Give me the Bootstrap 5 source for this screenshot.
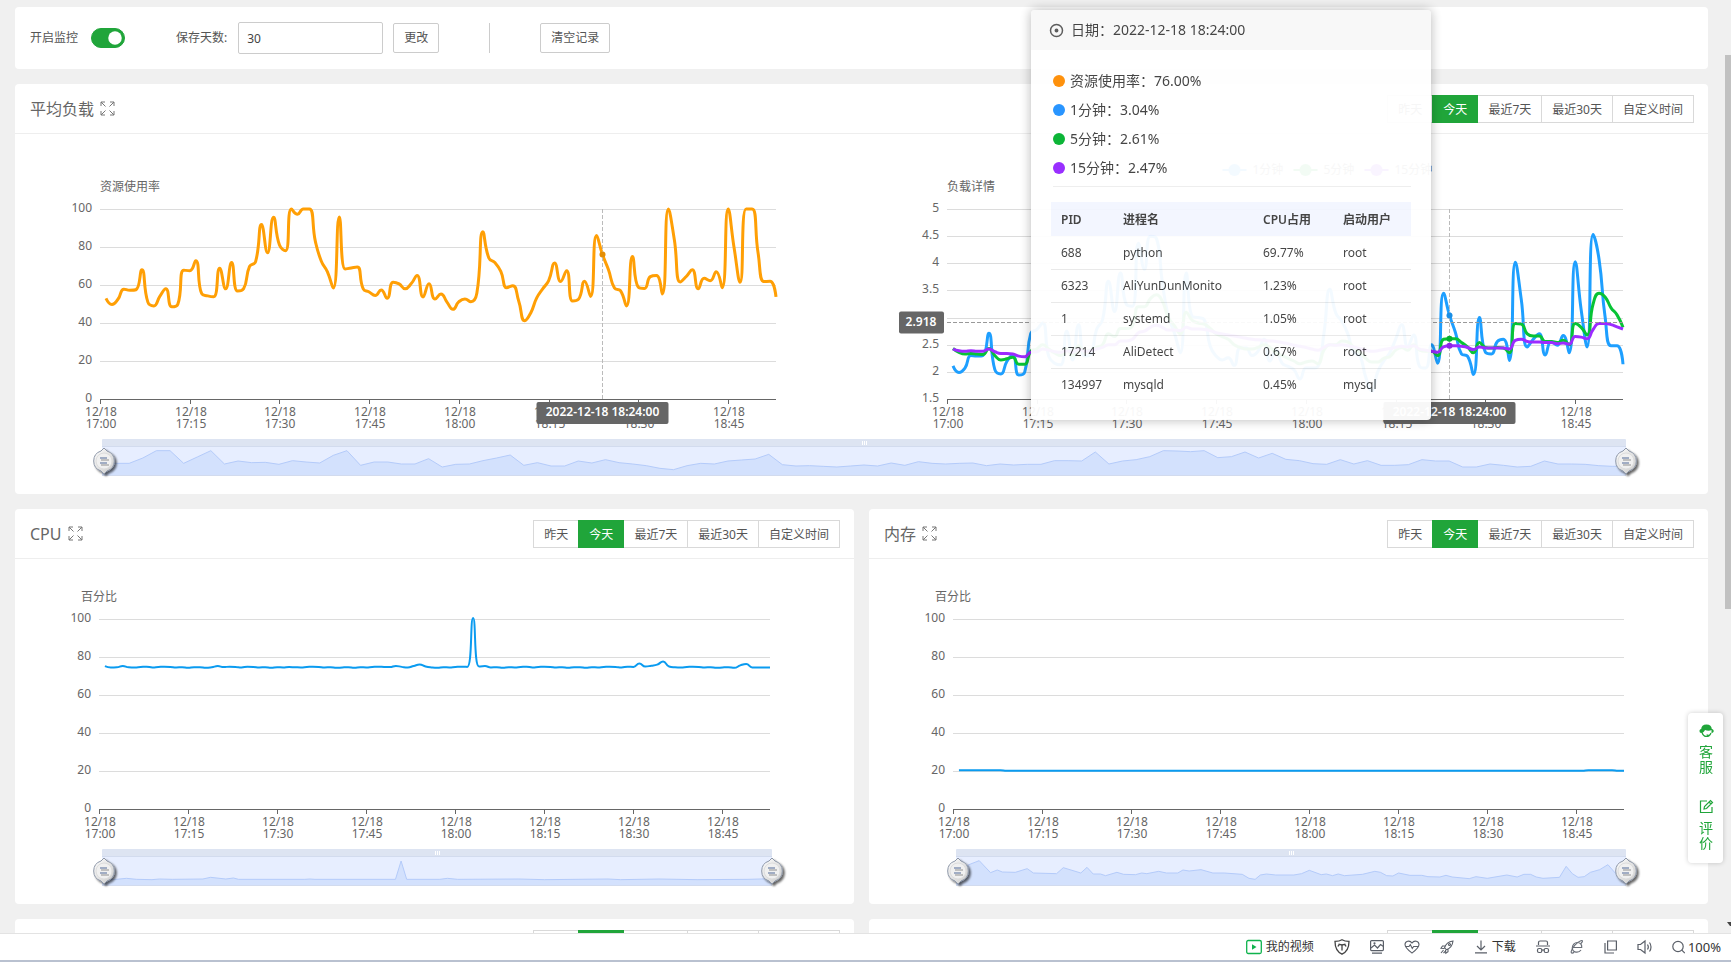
<!DOCTYPE html>
<html lang="zh-CN">
<head>
<meta charset="utf-8">
<meta name="viewport" content="width=device-width, initial-scale=1">
<title>监控</title>
<link rel="stylesheet" href="https://cdn.jsdelivr.net/npm/bootstrap@5.3.0/dist/css/bootstrap.min.css">
<style>
:root{--green:#20a53a;--line:#d9d9d9}
body{font-family:"Noto Sans","Noto Sans CJK SC",sans-serif;font-size:12px;line-height:18px;color:#555;background:#f0f0f0}
.page-scroll{padding:7px 23px 0 15px;gap:15px;min-height:0}
.panel{background:#fff;border-radius:4px}
.panel-pair{gap:15px}
.toolbar-panel{height:62px;padding:0 15px}
.panel-head{height:50px;padding:0 14px 0 15px;border-bottom:1px solid #eee}
.panel-title{font-size:16px;line-height:24px;font-weight:400;color:#666;gap:6px}
.ctl{border:1px solid #ccc;border-radius:2px;background:#fff;color:#555;height:30px;padding:0 10px;font-size:12px;line-height:18px}
.days-label{margin:0 11px 0 51px}
.days-input{width:145px;height:32px;padding:0 8px;margin-right:10px;color:#444}
.form-check-input.monitor-switch{width:34px;height:20px;margin:0 0 0 13px;border-color:var(--green);background-size:18px}
.monitor-switch:checked{background-color:var(--green)}
.split{width:1px;height:30px;background:#ccc;margin:0 50px}
.range-btns{height:28px}
.range-btns .btn{--bs-btn-font-size:12px;--bs-btn-line-height:18px;--bs-btn-padding-x:10px;--bs-btn-padding-y:0;--bs-btn-color:#555;--bs-btn-border-color:#d9d9d9;--bs-btn-border-radius:0;--bs-btn-bg:#fff;--bs-btn-active-bg:#20a53a;--bs-btn-active-border-color:#20a53a;--bs-btn-active-color:#fff;padding-top:2px}
.chart{display:block;width:100%;height:283px}
.zoomer{display:block;width:100%;height:62px}
.avg-charts{padding-top:15px}
svg text{font-size:12px;fill:#666}
svg text.flag{fill:#fff;font-weight:600}
.tip{right:277px;top:-74px;width:400px;height:410px;z-index:5;background:#fff;opacity:.95;border-radius:4px;box-shadow:0 0 12px rgba(0,0,0,.3);color:#3c3c3c}
.tip-head{height:40px;background:#f8f8f8;padding:0 18px;font-size:14px;gap:7px;border-radius:4px 4px 0 0}
.tip-list{margin:16px 20px 0 22px;font-size:14px;line-height:29px;border-bottom:1px solid #eee;height:121px}
.tip-list li{gap:5px}
.dot{width:12px;height:12px;border-radius:50%}
.tip-table{width:360px;margin:15px 0 0 20px;table-layout:fixed;font-size:12px;line-height:18px}
.tip-table th{height:34px;background:#f3f6ff;padding:2px 10px 0;font-weight:600}
.tip-table td{height:33px;padding:1px 10px 0;border-bottom:1px solid #e8e8e8}
.tip-table tr:last-child td{border-bottom:0}
.scroll-rail{right:0;top:0;width:6px}
.scroll-thumb{margin-top:55px;height:554px;background:#c1c1c1}
.side-tools{right:8px;top:713px;width:35px;height:150px;padding:10px 0 0 1px;background:#fff;border-radius:4px;box-shadow:0 0 5px rgba(0,0,0,.2);z-index:4;gap:25px}
.side-tools a{color:var(--green);font-size:14px;line-height:15px;gap:6px;width:14px;text-align:center}
.status-bar{height:29px;background:#fff;border-top:1px solid #e3e3e3;border-bottom:2px solid #b9c1d0;padding:0 10px 0 0;color:#333}
.status-bar svg{flex:none}
.status-bar a{color:#333;gap:4px}
.status-bar .zoom-level{font-size:13px;gap:3px}
.status-icons{gap:20px}
</style>
</head>
<body class="vh-100 overflow-hidden d-flex flex-column">
<main class="page-scroll flex-grow-1 overflow-hidden position-relative d-flex flex-column">
  <form class="panel toolbar-panel d-flex align-items-center flex-shrink-0">
    <label for="sw">开启监控</label>
    <div class="form-switch p-0 d-flex"><input class="form-check-input monitor-switch float-none" type="checkbox" role="switch" id="sw" checked></div>
    <label for="days" class="days-label">保存天数:</label>
    <input id="days" class="ctl days-input" type="text" value="30">
    <button type="button" class="ctl">更改</button>
    <span class="split"></span>
    <button type="button" class="ctl">清空记录</button>
  </form>

  <section class="panel position-relative flex-shrink-0">
    <div class="panel-head d-flex align-items-center justify-content-between">
      <h2 class="panel-title d-flex align-items-center m-0">平均负载<svg width="15" height="15"><use href="#expand"/></svg></h2>
      <div class="range-btns btn-group"></div>
    </div>
    <div class="avg-charts row g-0">
      <div class="col-6"><svg class="chart" id="usage"></svg></div>
      <div class="col-6"><svg class="chart" id="load"></svg></div>
    </div>
    <svg class="zoomer" id="zoomAvg"></svg>

    <div class="tip position-absolute">
      <div class="tip-head d-flex align-items-center"><svg width="15" height="15" viewBox="0 0 15 15" fill="none" stroke="#555" stroke-width="1.5"><circle cx="7.500" cy="7.500" r="6"/><circle cx="7.500" cy="7.500" r="1.200" fill="#555"/></svg><span>日期：2022-12-18 18:24:00</span></div>
      <ul class="tip-list list-unstyled">
        <li class="d-flex align-items-center"><span class="dot" style="background:#ff8c00"></span>资源使用率：76.00%</li>
        <li class="d-flex align-items-center"><span class="dot" style="background:#1e90ff"></span>1分钟：3.04%</li>
        <li class="d-flex align-items-center"><span class="dot" style="background:#00b22d"></span>5分钟：2.61%</li>
        <li class="d-flex align-items-center"><span class="dot" style="background:#9424ff"></span>15分钟：2.47%</li>
      </ul>
      <table class="tip-table">
        <colgroup><col style="width:62px"><col style="width:140px"><col style="width:80px"><col style="width:78px"></colgroup>
        <thead><tr><th>PID</th><th>进程名</th><th>CPU占用</th><th>启动用户</th></tr></thead>
        <tbody>
          <tr><td>688</td><td>python</td><td>69.77%</td><td>root</td></tr>
          <tr><td>6323</td><td>AliYunDunMonito</td><td>1.23%</td><td>root</td></tr>
          <tr><td>1</td><td>systemd</td><td>1.05%</td><td>root</td></tr>
          <tr><td>17214</td><td>AliDetect</td><td>0.67%</td><td>root</td></tr>
          <tr><td>134997</td><td>mysqld</td><td>0.45%</td><td>mysql</td></tr>
        </tbody>
      </table>
    </div>
  </section>

  <div class="d-flex panel-pair flex-shrink-0">
    <section class="panel flex-fill w-50">
      <div class="panel-head d-flex align-items-center justify-content-between">
        <h2 class="panel-title d-flex align-items-center m-0">CPU<svg width="15" height="15"><use href="#expand"/></svg></h2>
        <div class="range-btns btn-group"></div>
      </div>
      <svg class="chart" id="cpu"></svg>
      <svg class="zoomer" id="zoomCpu"></svg>
    </section>
    <section class="panel flex-fill w-50">
      <div class="panel-head d-flex align-items-center justify-content-between">
        <h2 class="panel-title d-flex align-items-center m-0">内存<svg width="15" height="15"><use href="#expand"/></svg></h2>
        <div class="range-btns btn-group"></div>
      </div>
      <svg class="chart" id="mem"></svg>
      <svg class="zoomer" id="zoomMem"></svg>
    </section>
  </div>

  <div class="d-flex panel-pair flex-shrink-0">
    <section class="panel flex-fill w-50"><div class="panel-head d-flex align-items-center justify-content-end"><div class="range-btns btn-group"></div></div></section>
    <section class="panel flex-fill w-50"><div class="panel-head d-flex align-items-center justify-content-end"><div class="range-btns btn-group"></div></div></section>
  </div>

  <div class="scroll-rail position-absolute h-100 d-flex flex-column justify-content-between">
    <div class="scroll-thumb"></div>
    <svg width="6" height="12" class="flex-shrink-0"><path d="M2 1h4v4h-1z" fill="#444"/></svg>
  </div>
</main>

<footer class="status-bar d-flex align-items-center justify-content-end flex-shrink-0">
  <div class="status-icons d-flex align-items-center">
    <a href="#" class="d-flex align-items-center text-decoration-none"><svg width="16" height="16" viewBox="0 0 16 16" fill="none" stroke="#0fb34d" stroke-width="1.300"><rect x=".7" y="1.500" width="14.600" height="13" rx="1.500"/><path d="M6 5.200v5.600l4.500-2.800z" fill="#0fb34d" stroke="none"/></svg>我的视频</a>
    <svg width="16" height="16" viewBox="0 0 16 16" fill="none" stroke="#444" stroke-width="1.300"><path d="M8 .8c2 1.200 4.500 1.600 7 1.600 0 6-1.500 10-7 12.800C2.500 12.400 1 8.400 1 2.400c2.500 0 5-.4 7-1.600z"/><path d="M4 7.500c.5-2 2.500-2.500 4-1.300 1.500-1.200 3.500-.7 4 1.300M4.500 5.200L8 6l3.500-.8M8 6v5.500"/></svg>
    <svg width="14" height="16" viewBox="0 0 14 16" fill="none" stroke="#5a5f68" stroke-width="1.200"><rect x=".6" y="1.600" width="12.800" height="10" rx="1"/><path d="M1 9l3.500-3 3 3 3-3.500 3 2M2 14.200h10"/><circle cx="4.500" cy="4.300" r=".5"/></svg>
    <svg width="16" height="16" viewBox="0 0 16 16" fill="none" stroke="#5a5f68" stroke-width="1.100"><path d="M8 14C4 11 1 8.800 1 5.500 1 2 5.800.8 8 4c2.200-3.200 7-2 7 1.500C15 8.800 12 11 8 14z"/><path d="M1.500 7.500H5l1.300-2 2 4 1.300-2h4.900"/></svg>
    <svg width="14" height="16" viewBox="0 0 14 16" fill="none" stroke="#5a5f68" stroke-width="1.100"><path d="M4.500 9C5.500 5.500 8.500 2.500 13 2c-.5 4.500-3 7.500-6.500 8.700zM5.200 7H2.500L1 9.200l3 .3M8 10v2.700L5.800 14.200 5.500 11M3.500 11L1 14M5 12.500L3.500 14"/><circle cx="9.500" cy="5.500" r="1"/></svg>
    <a href="#" class="d-flex align-items-center text-decoration-none"><svg width="14" height="16" viewBox="0 0 14 16" fill="none" stroke="#5a5f68" stroke-width="1.200"><path d="M7 1.500v9M3 7l4 4 4-4M1 13.800h12"/></svg>下载</a>
    <svg width="14" height="16" viewBox="0 0 14 16" fill="none" stroke="#5a5f68" stroke-width="1.200"><path d="M2.500 6V3.500c0-1 .5-1.500 1.500-1.500h6c1 0 1.500.5 1.500 1.500V6M0 7h14"/><rect x="1.500" y="9.500" width="4.300" height="4" rx="1.500"/><rect x="8.200" y="9.500" width="4.300" height="4" rx="1.500"/><path d="M5.800 11h2.400"/></svg>
    <svg width="14" height="16" viewBox="0 0 14 16" fill="none" stroke="#6a6f78" stroke-width="1.200"><path d="M3 8.500h8.700c.4-3-1.500-5-4.400-5C4.500 3.500 2.300 6 2.300 8.800c0 5 6.200 5.700 8.700 2.200"/><path d="M11 4.500c2-2 2-3.500-.2-2.800C7 3 2 8.500 1.200 12.500c-.3 2 1.300 2 3 .8"/></svg>
    <svg width="13" height="16" viewBox="0 0 13 16" fill="none" stroke="#5a5f68" stroke-width="1.200"><path d="M3.600 2h8.800v9H3.600zM1 4v10h9"/></svg>
    <svg width="15" height="16" viewBox="0 0 15 16" fill="none" stroke="#5a5f68" stroke-width="1.200"><path d="M1 5.500h2.500L8 2v12L3.500 10.500H1zM10.500 5.500c1 1.500 1 3.500 0 5M12.500 3.500c2 2.500 2 6.500 0 9"/></svg>
    <a href="#" class="zoom-level d-flex align-items-center text-decoration-none"><svg width="13" height="16" viewBox="0 0 13 16" fill="none" stroke="#5a5f68" stroke-width="1.200"><circle cx="6" cy="7.500" r="5.200"/><path d="M9.800 11.200l3 3"/></svg>100%</a>
  </div>
</footer>

<aside class="side-tools position-fixed d-flex flex-column align-items-center">
  <a href="#" class="d-flex flex-column align-items-center text-decoration-none"><svg width="15" height="15" viewBox="0 0 15 15" class="flex-shrink-0"><path d="M7.500 1.500C4 1.500 2.300 3.500 2.200 6 1 6 .5 7 .5 8s.6 2 1.800 2C4 9.800 5.500 8.500 6 7c2 1 5 1 6.500 0v3c1.500.2 2.200-1 2.200-2S14 6 12.800 6C12.700 3.500 11 1.500 7.500 1.500z" fill="#20a53a"/><path d="M3 9.500c1 3 3 4 4.500 4s3.500-1 4.500-3.500M7.500 12.200h2" fill="none" stroke="#20a53a" stroke-width="1.200"/></svg><span>客服</span></a>
  <a href="#" class="d-flex flex-column align-items-center text-decoration-none"><svg width="15" height="15" viewBox="0 0 15 15" fill="none" stroke="#20a53a" stroke-width="1.200" class="flex-shrink-0"><path d="M8 2H1.500v11.500h11.500V8"/><path d="M5 10l.5-2.500L11.500 1.500l2 2L7.500 9.500zM10 3l2 2"/></svg><span>评价</span></a>
</aside>

<svg width="0" height="0" class="position-absolute">
  <defs>
    <symbol id="expand" viewBox="0 0 15 15"><path d="M1 5V1h4M1 1l4.500 4.500M10 1h4v4M14 1L9.500 5.500M1 10v4h4M1 14l4.500-4.500M14 10v4h-4M14 14L9.500 9.500" fill="none" stroke="#777" stroke-width="1"/></symbol>
    <linearGradient id="silver" x1="0" y1="0" x2="1" y2="1"><stop offset="0" stop-color="#fff"/><stop offset="1" stop-color="#c8c8c8"/></linearGradient>
    <filter id="drop" x="-50%" y="-50%" width="200%" height="200%"><feDropShadow dx="2" dy="2" stdDeviation="1.200" flood-color="#000" flood-opacity=".6"/></filter>
  </defs>
</svg>

<script src="https://cdn.jsdelivr.net/npm/bootstrap@5.3.0/dist/js/bootstrap.bundle.min.js"></script>
<script>
document.querySelectorAll('.range-btns').forEach(g => {
  g.innerHTML = ['昨天','今天','最近7天','最近30天','自定义时间'].map((t, i) => `<button type="button" class="btn${i === 1 ? ' active' : ''}">${t}</button>`).join('');
});

// one sample per minute, starting at 17:01
const usage = [53,49.8,52.5,57.8,57.2,57.5,68,51,49,54,58,48.5,49.8,67.8,67.5,72.8,55.4,54.3,53.8,68.8,58,71.8,56.8,58,69.8,72.2,91.8,77,95.6,81,78,100,97.2,100,100,83,72.5,67,58.4,95.8,68.4,69,69.5,58,56.3,54.5,57.4,53,61.5,60.6,58,60.6,65,53.7,60.7,52.6,55.3,51,47.2,51.2,52.6,51.2,55.8,88,74.2,71.8,67.2,58.6,59.6,51.4,41.2,45.3,53.2,58,62.3,71.6,61.8,67.5,51.6,52.6,62,54,86,76,68,58.4,57,49,75,58.8,58.2,64.4,65,55.3,100,84,61.6,64.5,68,58,63.5,62.3,67,58.6,100,79.5,61.4,100,100,77,61.8,62,53.7];
const m1 = [2.11,1.99,2.07,2.3,2.29,2.3,2.71,2.04,1.96,2.19,2.31,1.94,2,2.71,2.78,2.9,2.29,2.16,2.13,2.75,2.22,2.87,2.29,2.32,2.78,2.96,3.67,3.11,3.82,3.24,3.21,4.37,3.89,4.5,4.46,3.64,3.02,2.72,2.35,3.82,3.02,3,2.96,2.47,2.29,2.22,2.26,2.12,2.44,2.44,2.3,2.38,2.6,2.2,2.4,2.16,2.1,2.04,1.87,2.07,2.07,2.1,2.7,3.52,3.08,2.93,2.7,2.35,2.3,1.9,1.65,2,2.2,2.35,2.6,2.87,2.47,2.68,2.1,2.07,2.5,2.16,3.45,3.04,2.72,2.33,2.29,1.95,3,2.36,2.33,2.56,2.6,2.21,4.02,3.33,2.46,2.6,2.7,2.31,2.56,2.49,2.67,2.35,4.03,3.15,2.46,4.53,4.07,3.02,2.48,2.48,2.14];
const m5 = [2.43,2.36,2.33,2.34,2.33,2.32,2.43,2.3,2.22,2.24,2.27,2.14,2.14,2.38,2.42,2.5,2.42,2.35,2.3,2.42,2.3,2.48,2.38,2.4,2.45,2.5,2.7,2.65,2.8,2.8,2.85,3.2,3.2,3.35,3.42,3.3,3,2.85,2.7,3.1,2.95,2.9,2.88,2.8,2.7,2.65,2.6,2.5,2.45,2.42,2.42,2.45,2.5,2.45,2.35,2.3,2.25,2.2,2.15,2.18,2.2,2.15,2.4,2.5,2.5,2.57,2.55,2.45,2.35,2.25,2.18,2.18,2.25,2.28,2.4,2.45,2.4,2.5,2.4,2.38,2.38,2.3,2.6,2.61,2.61,2.54,2.46,2.35,2.54,2.45,2.44,2.45,2.44,2.35,2.89,2.88,2.7,2.66,2.66,2.56,2.56,2.54,2.58,2.5,2.89,2.82,2.68,3.25,3.45,3.38,3.18,3.05,2.82];
const m15 = [2.42,2.39,2.38,2.39,2.38,2.38,2.42,2.37,2.34,2.34,2.33,2.29,2.28,2.36,2.37,2.42,2.4,2.37,2.36,2.39,2.36,2.42,2.38,2.39,2.42,2.45,2.5,2.5,2.57,2.57,2.6,2.72,2.75,2.82,2.86,2.82,2.77,2.77,2.76,2.82,2.79,2.79,2.78,2.76,2.72,2.7,2.68,2.66,2.64,2.62,2.6,2.59,2.58,2.57,2.56,2.54,2.52,2.49,2.47,2.45,2.42,2.4,2.45,2.5,2.49,2.5,2.48,2.46,2.43,2.4,2.38,2.39,2.41,2.43,2.45,2.47,2.46,2.48,2.42,2.4,2.38,2.36,2.46,2.48,2.48,2.47,2.45,2.41,2.46,2.44,2.44,2.44,2.44,2.42,2.58,2.6,2.56,2.55,2.55,2.54,2.54,2.52,2.53,2.51,2.65,2.64,2.61,2.78,2.89,2.89,2.87,2.83,2.79];
const cpu = Array.from({length: 113}, (_, i) => 74.6 + [0.2,-0.1,0,0.3,0,-0.1,0.1,-0.3][(i * 5 + (i >> 3)) % 8]);
Object.entries({1:75.2,4:75.3,20:75.2,50:75.3,53:75.3,54:76,55:75,63:100.5,64:75,65:75.2,91:76.6,92:75,93:75.4,94:76,95:77.6,96:75,108:75.6,109:76.3,110:74.5,111:74.5,112:74.5,113:74.5}).forEach(([k, v]) => cpu[k - 1] = v);
const mem = Array.from({length: 113}, (_, i) => i < 8 || (i > 105 && i < 111) ? 20.4 : 20.1);

// preview curves: heights above the slider's floor
const prevAvg = [131,131,131,115,93,93,131,112,93,133,124,129,128,134,123,127,130,107,93,137,127,127,133,133,117,142,134,133,123,115,106,137,129,139,139,124,130,120,129,133,138,146,150,138,131,133,124,121,118,104,135,139,138,140,142,139,136,139,130,137,126,131,133,131,130,138,133,136,134,134,123,123,124,97,133,124,120,111,93,94,96,93,114,111,97,115,101,119,123,132,134,120,133,123,137,137,135,120,124,124,142,142,133,137,142,140,124,133,133,134,138,140,139].map((v, i) => [i / 112, (166 - v) / 3]);
const prevCpu = [[82,898],[110,898],[130,895],[150,898],[180,899],[195,897],[220,898],[280,897],[295,892],[325,897],[340,894],[350,898],[480,898],[490,897],[500,898],[658,898],[669,843],[680,898],[745,898],[760,895],[780,898],[900,897],[950,899],[1075,897],[1100,899],[1175,897],[1250,899],[1350,898],[1397,896]].map(([x, y]) => [(x - 82) / 1315, (915 - y) / 3]);
const prevMem = [[70,398],[95,375],[115,363],[137,399],[150,391],[160,397],[185,398],[208,387],[220,400],[265,402],[278,384],[312,400],[324,383],[336,403],[350,403],[360,408],[382,398],[395,404],[418,405],[430,400],[440,402],[463,395],[478,400],[500,400],[510,391],[522,394],[545,390],[568,400],[590,400],[625,404],[638,416],[650,419],[660,406],[672,403],[690,406],[725,406],[740,402],[755,392],[778,405],[788,403],[800,408],[811,403],[823,408],[858,404],[882,395],[893,398],[905,408],[917,409],[928,400],[950,407],[973,407],[985,411],[1008,412],[1020,407],[1032,412],[1065,417],[1078,411],[1100,416],[1138,406],[1158,412],[1171,404],[1184,404],[1195,412],[1208,416],[1240,413],[1253,380],[1265,402],[1276,413],[1288,411],[1300,398],[1318,390],[1334,375],[1348,400],[1369,400]].map(([x, y]) => [(x - 70) / 1299, (436 - y) / 3]);

const clamp = (v, a, b) => Math.max(Math.min(a, b), Math.min(Math.max(a, b), v));

function smoothPath(p) {
  let d = `M${p[0]}`, c0 = p[0];
  for (let i = 1; i < p.length; i++) {
    const [x, y] = p[i], pr = p[i - 1], nx = p[i + 1];
    let c1 = [x, y], next = [x, y];
    if (nx) {
      const lp = Math.hypot(x - pr[0], y - pr[1]), ln = Math.hypot(nx[0] - x, nx[1] - y), r = ln / (lp + ln);
      next = [0, 1].map(k => clamp(p[i][k] + (nx[k] - pr[k]) * 0.5 * r, p[i][k], nx[k]));
      c1 = [0, 1].map(k => clamp(p[i][k] - (next[k] - p[i][k]) * lp / ln, pr[k], p[i][k]));
      next = [0, 1].map(k => p[i][k] + (p[i][k] - c1[k]) * ln / lp);
    }
    d += `C${c0} ${c1} ${x},${y}`;
    c0 = next;
  }
  return d;
}

function drawChart(id, o) {
  const el = document.getElementById(id), W = el.getBoundingClientRect().width;
  const L = Math.floor(W * 0.1 + 0.4), R = Math.floor(W * 0.9), T = 60, B = 250;
  const X = m => L + (R - L) * m / 113, Y = v => B - (B - T) * (v - o.min) / (o.max - o.min);
  let s = `<text x="${L}" y="42" text-anchor="${o.anchor || 'start'}">${o.title}</text>`;
  for (let v = o.min; v <= o.max; v += o.step) {
    const y = Math.round(Y(v)) + 0.5;
    if (v > o.min) s += `<path d="M${L} ${y}H${R}" stroke="#dcdcdc"/>`;
    if (!(o.skip && v === o.skip)) s += `<text x="${L - 8}" y="${y + 2}" text-anchor="end">${v}</text>`;
  }
  s += `<path d="M${L} ${B + 0.5}H${R}" stroke="#666"/>`;
  for (let m = 0; m < 113; m += 15) {
    const x = Math.round(X(m)), t = `${17 + Math.floor(m / 60)}:${String(m % 60).padStart(2, '0')}`;
    s += `<path d="M${x + 0.5} ${B}v5" stroke="#666"/><text x="${x + 1}" y="${B + 17}" text-anchor="middle">12/18</text><text x="${x + 1}" y="${B + 29}" text-anchor="middle">${t}</text>`;
  }
  o.series.forEach(([color, data]) => {
    s += `<path d="${smoothPath(data.map((v, i) => [X(i + 1), Y(v)]))}" fill="none" stroke="${color}" stroke-width="${o.width}" stroke-linejoin="round"/>`;
  });
  if (o.pointer) {
    const x = Math.floor(X(o.pointer)) + 0.5;
    s += `<path d="M${x} ${T}V${B}" stroke="#bbb" stroke-dasharray="4 2"/>`;
    o.series.forEach(([color, data]) => s += `<circle cx="${x}" cy="${Y(data[o.pointer - 1])}" r="3" fill="${color}"/><circle cx="${x}" cy="${Y(data[o.pointer - 1])}" r="3" fill="#000" opacity=".1"/>`);
    s += `<rect x="${x - 66}" y="${B + 3}" width="132" height="22" rx="2" fill="#666"/><text class="flag" x="${x}" y="${B + 17}" text-anchor="middle">2022-12-18 18:24:00</text>`;
  }
  if (o.cross) {
    const y = Math.round(Y(o.cross)) + 0.5;
    s += `<path d="M${L} ${y}H${R}" stroke="#999" stroke-dasharray="4 2"/><rect x="${L - 48}" y="${y - 11}" width="45" height="22" rx="2" fill="#666"/><text class="flag" x="${L - 26}" y="${y + 3}" text-anchor="middle">${o.cross}</text>`;
  }
  if (o.legend) o.legend.forEach(([t, c], i) => {
    const x = W - 474 + i * 71;
    s += `<path d="M${x - 12} 21h24" stroke="${c}" stroke-width="2"/><circle cx="${x}" cy="21" r="6" fill="${c}"/><text x="${x + 18}" y="25">${t}</text>`;
  });
  el.innerHTML = s;
}

function drawZoomer(id, pts) {
  const el = document.getElementById(id), W = el.getBoundingClientRect().width, L = 87, R = W - 82;
  const line = pts.map(([f, h]) => `${L + (R - L) * f},${43 - h}`).join('L'), mid = Math.round((L + R) / 2) + 0.5;
  const grip = x => `<g transform="translate(${x} 29)"><path d="M0-13l3 3A10.500 10.500 0 0 1 3 10L0 13l-3-3A10.500 10.500 0 0 1-3-10z" fill="url(#silver)" stroke="#8d97a8" filter="url(#drop)"/><circle r="8" fill="#f0f0f0" stroke="#ddd"/><path d="M-4-3h7M-4 2h7" stroke="#8796b5" stroke-width="1.500"/><path d="M-3-1h8M-3 4h8" stroke="#b0b0b0" stroke-width="1.500"/></g>`;
  el.innerHTML = `<rect x="${L}" y="7" width="${R - L}" height="8" rx="1" fill="#dde4f2"/><rect x="${L}" y="15" width="${R - L}" height="28" fill="#e7eeff"/>
    <path d="M${line}L${R},43H${L}z" fill="#d3e1fd"/><path d="M${line}" fill="none" stroke="#b4cbfa"/>
    <path d="M${L} 14.500H${R}M${L} 43.500H${R}" stroke="#d2dbee"/><path d="M${mid - 2} 9v4M${mid} 9v4M${mid + 2} 9v4" stroke="#fff"/>${grip(L + 2)}${grip(R)}`;
}

function draw() {
  drawChart('usage', {title: '资源使用率', min: 0, max: 100, step: 20, width: 3, pointer: 84, series: [['#ff9f05', usage]]});
  drawChart('load', {title: '负载详情', min: 1.5, max: 5, step: 0.5, skip: 3, width: 3, pointer: 84, cross: 2.918, series: [['#1e9fff', m1], ['#07c335', m5], ['#9c2bff', m15]], legend: [['1分钟', '#1e9fff'], ['5分钟', '#07c335'], ['15分钟', '#9c2bff']]});
  drawChart('cpu', {title: '百分比', anchor: 'middle', min: 0, max: 100, step: 20, width: 2, series: [['#0a9bf0', cpu]]});
  drawChart('mem', {title: '百分比', anchor: 'middle', min: 0, max: 100, step: 20, width: 2, series: [['#0a9bf0', mem]]});
  drawZoomer('zoomAvg', prevAvg);
  drawZoomer('zoomCpu', prevCpu);
  drawZoomer('zoomMem', prevMem);
}
draw();
addEventListener('resize', draw);
</script>
</body>
</html>
